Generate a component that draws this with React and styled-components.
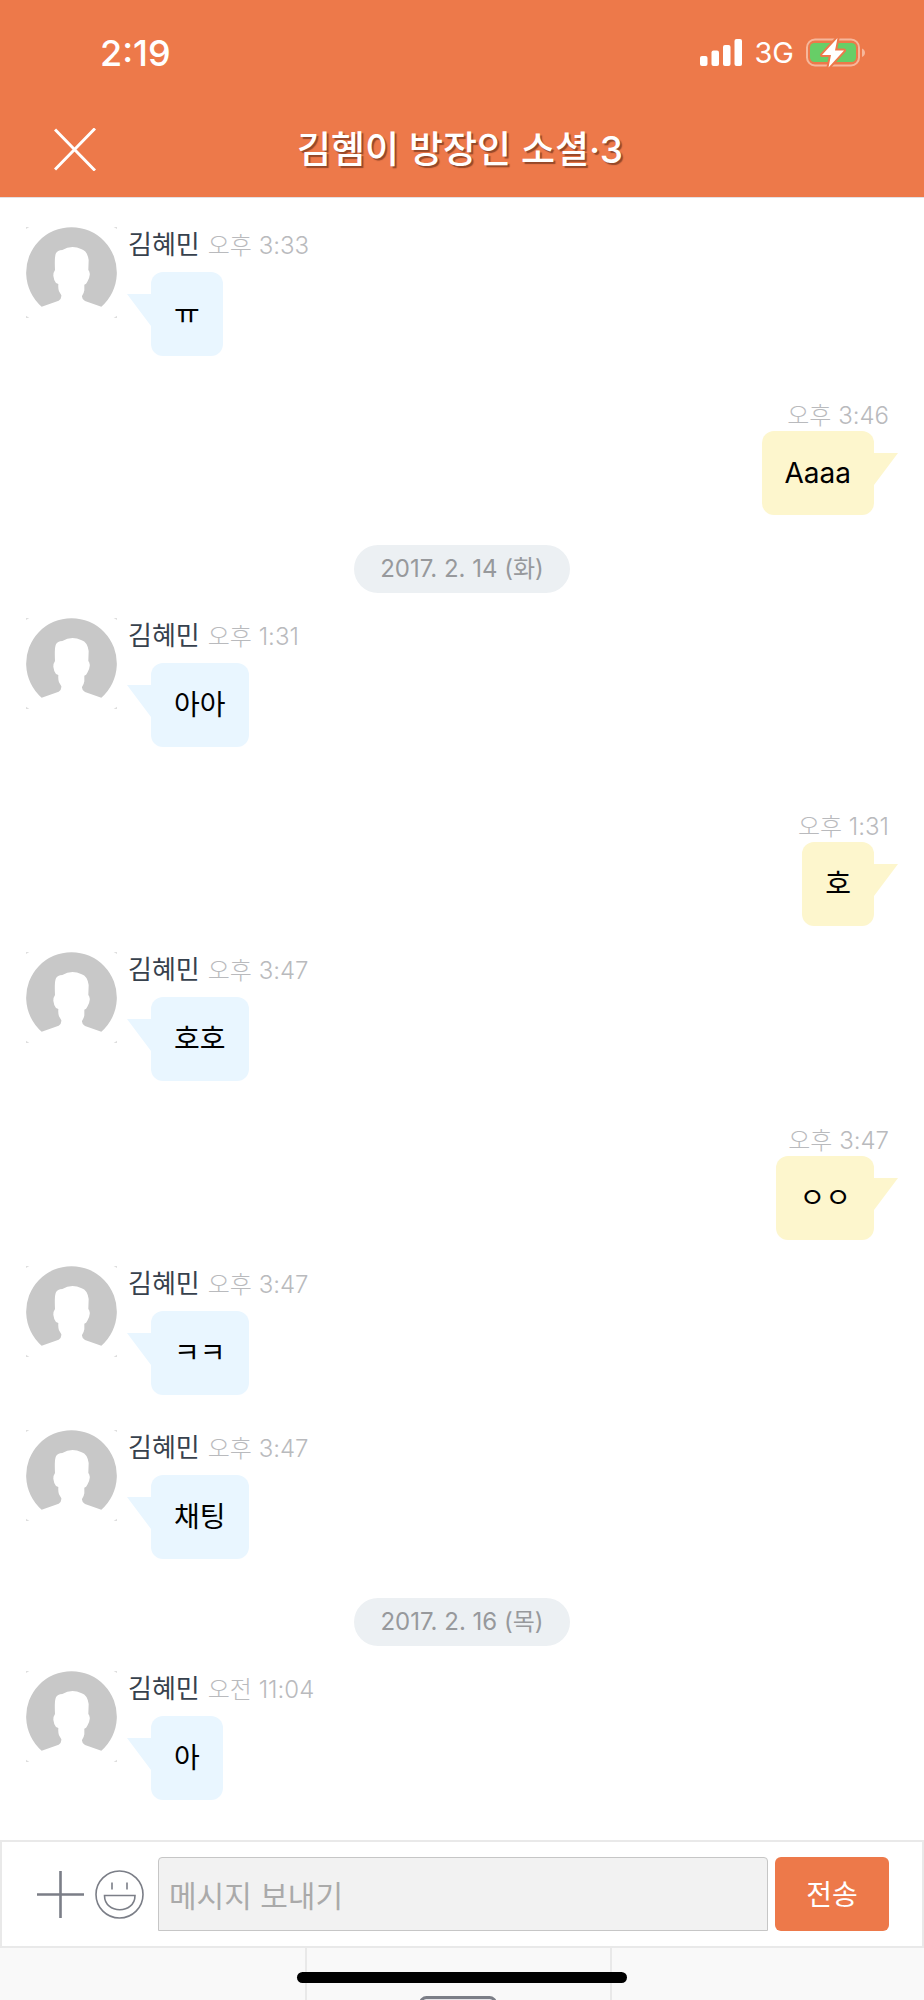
import React from "react";
import styled, { createGlobalStyle } from "styled-components";

const GlobalStyle = createGlobalStyle`
  * {
    box-sizing: border-box;
  }
  body {
    margin: 0;
    background: #ffffff;
    font-family: Inter, "Noto Sans CJK KR", sans-serif;
  }
  button,
  input {
    font-family: inherit;
  }
`;

const Page = styled.div`
  display: flex;
  flex-direction: column;
  min-height: 100vh;
`;

const Header = styled.header`
  background: #ed794a;
  border-bottom: 1px solid #e3e0e4;
  color: #ffffff;
`;

const StatusBar = styled.div`
  display: flex;
  align-items: center;
  justify-content: space-between;
  height: 105px;
  padding: 0 58px 0 100px;
`;

const Clock = styled.span`
  font-size: 36px;
  font-weight: 500;
`;

const StatusIcons = styled.div`
  display: flex;
  align-items: center;
  gap: 12px;
  font-size: 29px;
`;

const NavBar = styled.div`
  display: grid;
  grid-template-columns: 100px 1fr 104px;
  align-items: center;
  height: 92px;
  padding-bottom: 4px;
`;

const IconButton = styled.button`
  display: flex;
  padding: 0;
  border: 0;
  background: none;
  cursor: pointer;
`;

const CloseButton = styled(IconButton)`
  justify-content: flex-end;
  padding-right: 4px;
`;

const Title = styled.h1`
  margin: 0;
  padding-top: 2px;
  font-size: 37px;
  line-height: 48px;
  font-weight: 500;
  text-align: center;
  text-shadow: 2px 2px 1px rgba(90, 40, 20, 0.6);
`;

const Messages = styled.main`
  display: flex;
  flex-direction: column;
  padding: 29px 26px 5px;
`;

const Incoming = styled.article`
  display: flex;
  align-items: flex-start;
  gap: 11px;
  margin-bottom: ${({ $spaced }) => ($spaced ? 55 : 35)}px;
`;

const Outgoing = styled.article`
  display: flex;
  flex-direction: column;
  align-items: flex-end;
  margin: 10px 0 26px;
  padding-right: 24px;
`;

const Meta = styled.div`
  display: flex;
  align-items: baseline;
  gap: 8px;
  height: 45px;
`;

const Name = styled.span`
  color: #37414d;
  font-size: 26px;
  line-height: 36px;
`;

const Time = styled.time`
  color: #b9babd;
  font-size: 24px;
  line-height: 30px;
  font-weight: 300;
`;

const OutgoingTime = styled(Time)`
  margin-right: -15px;
`;

const Bubble = styled.p`
  position: relative;
  width: fit-content;
  margin: 0 0 0 ${({ $mine }) => ($mine ? 0 : 23)}px;
  padding: 0 23px;
  border-radius: 12px;
  background: ${({ $mine }) => ($mine ? "#fdf6cd" : "#e9f6ff")};
  color: #000000;
  font-size: 28px;
  line-height: 84px;

  &::after {
    content: "";
    position: absolute;
    top: 22px;
    ${({ $mine }) => ($mine ? "left: 100%" : "right: 100%")};
    width: 24px;
    height: 32px;
    background: inherit;
    clip-path: ${({ $mine }) =>
      $mine ? "polygon(0 0, 100% 0, 0 100%)" : "polygon(0 0, 100% 0, 100% 100%)"};
  }
`;

const DatePill = styled.div`
  align-self: center;
  margin: 4px 0 25px;
  padding: 0 26px;
  border-radius: 24px;
  background: #ecf0f3;
  color: #97999c;
  font-size: 24px;
  line-height: 48px;
`;

const Composer = styled.form`
  display: flex;
  align-items: center;
  padding: 15px 33px 15px 35px;
  border: 2px solid #e9e9e9;
`;

const EmojiButton = styled(IconButton)`
  margin: 0 14px 0 11px;
`;

const MessageInput = styled.input`
  flex: 1;
  min-width: 0;
  height: 74px;
  padding: 4px 10px 0;
  border: 1px solid #c6c6c6;
  border-radius: 4px 4px 0 0;
  background: #f2f2f2;
  font-size: 30px;

  &::placeholder {
    color: #aaaaaa;
    opacity: 1;
  }
`;

const SendButton = styled.button`
  width: 114px;
  height: 74px;
  margin-left: 7px;
  padding: 0 0 2px;
  border: 0;
  border-radius: 6px;
  background: #ed794a;
  color: #ffffff;
  font-size: 28px;
  cursor: pointer;
`;

const Tray = styled.div`
  position: relative;
  display: grid;
  grid-template-columns: 33% 33% 1fr;
  height: 52px;
  overflow: hidden;
  background: #f9f9f9;
`;

const TrayCell = styled.div`
  display: flex;
  justify-content: center;
  padding-top: 48px;

  & + & {
    border-left: 2px solid #e9e9e9;
  }
`;

const HomeIndicator = styled.div`
  position: absolute;
  top: 24px;
  left: 50%;
  width: 330px;
  height: 11px;
  border-radius: 6px;
  background: #000000;
  transform: translateX(-50%);
`;

const SignalIcon = () => (
  <svg width="42" height="27" viewBox="0 0 42 27" fill="#fff">
    <rect x="0" y="17" width="7.5" height="10" rx="2" />
    <rect x="11.5" y="11.5" width="7.5" height="15.5" rx="2" />
    <rect x="23" y="6" width="7.5" height="21" rx="2" />
    <rect x="34.5" y="0" width="7.5" height="27" rx="2" />
  </svg>
);

const BatteryIcon = () => (
  <svg width="60" height="30" viewBox="0 0 60 30">
    <rect
      x="1"
      y="1.5"
      width="52"
      height="26"
      rx="8"
      fill="none"
      stroke="#f6b79b"
      strokeWidth="2"
    />
    <path d="M56 10.5c4 1.5 4 7 0 8.5z" fill="#f6b79b" />
    <rect x="4" y="5" width="46" height="19" rx="4.5" fill="#67ce67" />
    <path
      d="M31.5 0L16 17h9L22.5 29.5 38 12.5h-9z"
      fill="#fff"
      stroke="#ed794a"
      strokeWidth="4"
      strokeLinejoin="round"
      paintOrder="stroke"
    />
  </svg>
);

const CloseIcon = () => (
  <svg width="42" height="43" viewBox="0 0 42 43">
    <path d="M1 1.5l40 41M41 .5l-40 41" stroke="#fff" strokeWidth="3" />
  </svg>
);

const Avatar = () => (
  <svg width="91" height="91" viewBox="0 0 273 273">
    <path
      d="M0 0h10L0 6zM273 0h-10l10 6zM0 273h10l-10-7zM273 273h-10l10-7z"
      fill="#dedede"
    />
    <path
      d="M47 239A136 136 0 1 1 226 239L177 222Q167 216 168 207Q174 198 175 190L175 173Q181 171 184 164Q193 148 191 139Q190 132 187 129L188 99Q184 72 167 67Q137 52 109 69Q94 70 90 79Q85 88 87 129Q82 136 82 146Q83 158 90 168L97 171Q96 186 99 193L106 205Q107 215 98 221Z"
      fill="#c8c8c8"
    />
  </svg>
);

const PlusIcon = () => (
  <svg width="47" height="47" viewBox="0 0 47 47">
    <path d="M23.5 0v47M0 23.5h47" stroke="#7b7e87" strokeWidth="2.6" />
  </svg>
);

const SmileIcon = () => (
  <svg
    width="49"
    height="49"
    viewBox="0 0 49 49"
    fill="none"
    stroke="#7b7e87"
    strokeWidth="1.6"
  >
    <circle cx="24.5" cy="24.5" r="23.5" />
    <path d="M17 12.5v7M32 12.5v7M9.5 25.5h30.5c0 19-30.5 19-30.5 0z" />
  </svg>
);

const KeyboardIcon = () => (
  <svg width="78" height="50" viewBox="0 0 78 50">
    <rect
      x="1.5"
      y="1.5"
      width="75"
      height="47"
      rx="6"
      fill="#e4e4e8"
      stroke="#7b7e87"
      strokeWidth="3"
    />
  </svg>
);

const items = [
  { type: "in", time: "오후 3:33", text: "ㅠ" },
  { type: "out", time: "오후 3:46", text: "Aaaa" },
  { type: "date", text: "2017. 2. 14 (화)" },
  { type: "in", time: "오후 1:31", text: "아아", spaced: true },
  { type: "out", time: "오후 1:31", text: "호" },
  { type: "in", time: "오후 3:47", text: "호호" },
  { type: "out", time: "오후 3:47", text: "ㅇㅇ" },
  { type: "in", time: "오후 3:47", text: "ㅋㅋ" },
  { type: "in", time: "오후 3:47", text: "채팅" },
  { type: "date", text: "2017. 2. 16 (목)" },
  { type: "in", time: "오전 11:04", text: "아" },
];

const ChatItem = ({ type, time, text, spaced }) => {
  if (type === "date") {
    return <DatePill>{text}</DatePill>;
  }
  if (type === "out") {
    return (
      <Outgoing>
        <OutgoingTime>{time}</OutgoingTime>
        <Bubble $mine>{text}</Bubble>
      </Outgoing>
    );
  }
  return (
    <Incoming $spaced={spaced}>
      <Avatar />
      <div>
        <Meta>
          <Name>김혜민</Name>
          <Time>{time}</Time>
        </Meta>
        <Bubble>{text}</Bubble>
      </div>
    </Incoming>
  );
};

const App = () => {
  return (
    <Page>
      <GlobalStyle />
      <Header>
        <StatusBar>
          <Clock>2:19</Clock>
          <StatusIcons>
            <SignalIcon />
            <span>3G</span>
            <BatteryIcon />
          </StatusIcons>
        </StatusBar>
        <NavBar>
          <CloseButton type="button" aria-label="닫기">
            <CloseIcon />
          </CloseButton>
          <Title>김혬이 방장인 소셜·3</Title>
        </NavBar>
      </Header>
      <Messages>
        {items.map((item, i) => (
          <ChatItem key={i} {...item} />
        ))}
      </Messages>
      <Composer onSubmit={(e) => e.preventDefault()}>
        <IconButton type="button" aria-label="추가">
          <PlusIcon />
        </IconButton>
        <EmojiButton type="button" aria-label="이모티콘">
          <SmileIcon />
        </EmojiButton>
        <MessageInput
          type="text"
          aria-label="메시지 보내기"
          placeholder="메시지 보내기"
        />
        <SendButton type="submit">전송</SendButton>
      </Composer>
      <Tray>
        <TrayCell />
        <TrayCell>
          <KeyboardIcon />
        </TrayCell>
        <TrayCell />
        <HomeIndicator />
      </Tray>
    </Page>
  );
};

export default App;
